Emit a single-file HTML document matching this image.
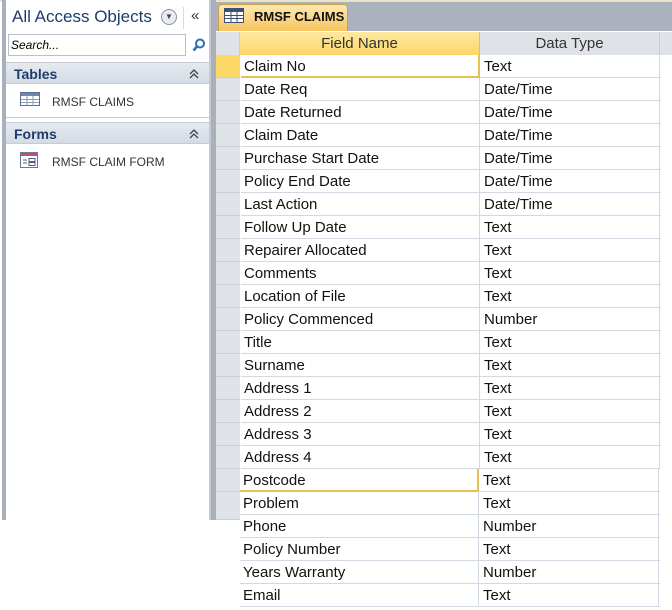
<html><head><style>
body{margin:0;width:672px;height:610px;background:#fff;position:relative;overflow:hidden;font-family:"Liberation Sans","DejaVu Sans",sans-serif}
.a{position:absolute}
.nav{left:2px;top:0;width:209px;height:520px;background:#fff;border-left:4px solid #a9b0bb;border-right:2px solid #c5cad2;box-sizing:border-box}
.grp{position:absolute;left:0;width:203px;height:22px;background:linear-gradient(#e6eaf0,#d4dbe5);border-top:1px solid #c5ccd6;border-bottom:1px solid #c5ccd6;font-weight:bold;color:#1e3d6d;font-size:14px;line-height:22px;padding-left:8px;box-sizing:border-box}
.row{position:absolute;height:23px;border-bottom:1px solid #d3d9e3;box-sizing:border-box;font-size:15px;line-height:24px;color:#111}
.c1{position:absolute;left:0;padding-left:3px;width:239px;height:23px;box-sizing:border-box;border-right:1px solid #d3d9e3}
.c2{position:absolute;left:239px;padding-left:4px;width:180px;height:23px;box-sizing:border-box;border-right:1px solid #d3d9e3}
.sel{position:absolute;left:216px;width:24px;height:23px;background:#dfe3e8;border-bottom:1px solid #c8ced6;box-sizing:border-box}
.chev{position:absolute;right:10px;top:6px}
</style></head><body>
<div class="a" style="left:0;top:0;width:672px;height:2px;background:#e8e4c8"></div>
<div class="a nav">
 <div class="a" style="left:6px;top:7px;font-size:17px;color:#1e3d6d">All Access Objects</div>
 <div class="a" style="left:155px;top:9px;width:14px;height:14px;border:1px solid #8a94a2;border-radius:50%;background:#e8ebef;font-size:8px;text-align:center;line-height:14px;color:#444">▼</div>
 <div class="a" style="left:177px;top:7px;width:1px;height:22px;background:#d6dbe2"></div>
 <div class="a" style="left:185px;top:7px;font-size:15px;color:#333">«</div>
 <div class="a" style="left:2px;top:34px;width:178px;height:22px;border:1px solid #b8c0cc;box-sizing:border-box;font-size:12px;font-style:italic;line-height:20px;padding-left:2px;color:#000">Search...</div>
 <svg class="a" style="left:186px;top:38px" width="14" height="14"><circle cx="8" cy="5.5" r="4" fill="none" stroke="#2c6bb5" stroke-width="2"/><path d="M5 8.5L1.5 12.5" stroke="#2c6bb5" stroke-width="2.5"/></svg>
 <div class="grp" style="top:62px">Tables<svg class="chev" width="10" height="10"><path d="M1 5L5 1L9 5M1 9L5 5L9 9" fill="none" stroke="#444" stroke-width="1.3"/></svg></div>
 <svg class="a" style="left:14px;top:92px" width="20" height="14"><rect x="0.5" y="0.5" width="19" height="13" fill="#fff" stroke="#5a6f92"/><rect x="1" y="1" width="18" height="3" fill="#6f86ad"/><path d="M1 7.5H19M1 10.5H19M7 4V14M13 4V14" stroke="#8a9cbc"/></svg>
 <div class="a" style="left:46px;top:95px;font-size:12px;color:#333">RMSF CLAIMS</div>
 <div class="a" style="left:0;top:117px;width:203px;height:1px;background:#c5ccd6"></div>
 <div class="grp" style="top:122px">Forms<svg class="chev" width="10" height="10"><path d="M1 5L5 1L9 5M1 9L5 5L9 9" fill="none" stroke="#444" stroke-width="1.3"/></svg></div>
 <svg class="a" style="left:14px;top:152px" width="18" height="16"><rect x="0.5" y="0.5" width="17" height="15" fill="#fff" stroke="#6a7a96"/><rect x="1" y="1" width="16" height="3" fill="#c0506a"/><path d="M3 8H7M3 11H7M9 6.5H15V9.5H9ZM9 10.5H15V13.5H9Z" stroke="#4a5f86" fill="none"/></svg>
 <div class="a" style="left:46px;top:155px;font-size:12px;color:#333">RMSF CLAIM FORM</div>
</div>
<div class="a" style="left:211px;top:0;width:5px;height:520px;background:#a9b0bb"></div>
<div class="a" style="left:216px;top:2px;width:456px;height:29px;background:#abb2bd"></div>
<div class="a" style="left:218px;top:4px;width:130px;height:27px;background:linear-gradient(#fde9b0,#f7c460);border:1px solid #c9a04a;border-bottom:none;border-radius:4px 4px 0 0;box-sizing:border-box"></div>
<svg class="a" style="left:224px;top:8px" width="20" height="15"><rect x="0.5" y="0.5" width="19" height="14" fill="#fff" stroke="#3d4f73"/><rect x="1" y="1" width="18" height="3" fill="#3d4f73"/><path d="M1 7.5H19M1 10.5H19M7 4V15M13 4V15" stroke="#3d4f73"/></svg>
<div class="a" style="left:254px;top:9px;font-size:13px;font-weight:bold;color:#111">RMSF CLAIMS</div>
<div class="a" style="left:216px;top:31px;width:456px;height:489px;background:#fff"></div>
<div class="a" style="left:216px;top:32px;width:24px;height:23px;background:#dfe3e8;border-right:1px solid #c8ced6;box-sizing:border-box"></div>
<div class="a" style="left:240px;top:32px;width:240px;height:23px;background:linear-gradient(#fee9a0,#fbd768);border-right:1px solid #e0c060;box-sizing:border-box;text-align:center;font-size:15px;line-height:24px;color:#333">Field Name</div>
<div class="a" style="left:480px;top:32px;width:180px;height:23px;background:#dfe3e8;border-right:1px solid #c8ced6;box-sizing:border-box;text-align:center;font-size:15px;line-height:24px;color:#333">Data Type</div>
<div class="a" style="left:660px;top:32px;width:12px;height:23px;background:#dfe3e8"></div>
<div class="sel" style="top:55px;background:#fbd768"></div>
<div class="sel" style="top:78px"></div><div class="sel" style="top:101px"></div><div class="sel" style="top:124px"></div><div class="sel" style="top:147px"></div><div class="sel" style="top:170px"></div><div class="sel" style="top:193px"></div><div class="sel" style="top:216px"></div><div class="sel" style="top:239px"></div><div class="sel" style="top:262px"></div><div class="sel" style="top:285px"></div><div class="sel" style="top:308px"></div><div class="sel" style="top:331px"></div><div class="sel" style="top:354px"></div><div class="sel" style="top:377px"></div><div class="sel" style="top:400px"></div><div class="sel" style="top:423px"></div><div class="sel" style="top:446px"></div><div class="sel" style="top:469px"></div><div class="sel" style="top:492px;height:28px"></div>
<div class="row" style="left:241px;top:55px;width:420px"><div class="c1" style="border-right:2px solid #e8c050;border-bottom:2px solid #e8c050">Claim No</div><div class="c2">Text</div></div>
<div class="row" style="left:241px;top:78px;width:420px"><div class="c1">Date Req</div><div class="c2">Date/Time</div></div>
<div class="row" style="left:241px;top:101px;width:420px"><div class="c1">Date Returned</div><div class="c2">Date/Time</div></div>
<div class="row" style="left:241px;top:124px;width:420px"><div class="c1">Claim Date</div><div class="c2">Date/Time</div></div>
<div class="row" style="left:241px;top:147px;width:420px"><div class="c1">Purchase Start Date</div><div class="c2">Date/Time</div></div>
<div class="row" style="left:241px;top:170px;width:420px"><div class="c1">Policy End Date</div><div class="c2">Date/Time</div></div>
<div class="row" style="left:241px;top:193px;width:420px"><div class="c1">Last Action</div><div class="c2">Date/Time</div></div>
<div class="row" style="left:241px;top:216px;width:420px"><div class="c1">Follow Up Date</div><div class="c2">Text</div></div>
<div class="row" style="left:241px;top:239px;width:420px"><div class="c1">Repairer Allocated</div><div class="c2">Text</div></div>
<div class="row" style="left:241px;top:262px;width:420px"><div class="c1">Comments</div><div class="c2">Text</div></div>
<div class="row" style="left:241px;top:285px;width:420px"><div class="c1">Location of File</div><div class="c2">Text</div></div>
<div class="row" style="left:241px;top:308px;width:420px"><div class="c1">Policy Commenced</div><div class="c2">Number</div></div>
<div class="row" style="left:241px;top:331px;width:420px"><div class="c1">Title</div><div class="c2">Text</div></div>
<div class="row" style="left:241px;top:354px;width:420px"><div class="c1">Surname</div><div class="c2">Text</div></div>
<div class="row" style="left:241px;top:377px;width:420px"><div class="c1">Address 1</div><div class="c2">Text</div></div>
<div class="row" style="left:241px;top:400px;width:420px"><div class="c1">Address 2</div><div class="c2">Text</div></div>
<div class="row" style="left:241px;top:423px;width:420px"><div class="c1">Address 3</div><div class="c2">Text</div></div>
<div class="row" style="left:241px;top:446px;width:420px"><div class="c1">Address 4</div><div class="c2">Text</div></div>
<div class="row" style="left:240px;top:469px;width:420px"><div class="c1" style="border-right:2px solid #e8c050;border-bottom:2px solid #e8c050">Postcode</div><div class="c2">Text</div></div>
<div class="row" style="left:240px;top:492px;width:420px"><div class="c1">Problem</div><div class="c2">Text</div></div>
<div class="row" style="left:240px;top:515px;width:420px"><div class="c1">Phone</div><div class="c2">Number</div></div>
<div class="row" style="left:240px;top:538px;width:420px"><div class="c1">Policy Number</div><div class="c2">Text</div></div>
<div class="row" style="left:240px;top:561px;width:420px"><div class="c1">Years Warranty</div><div class="c2">Number</div></div>
<div class="row" style="left:240px;top:584px;width:420px"><div class="c1">Email</div><div class="c2">Text</div></div>
</body></html>
